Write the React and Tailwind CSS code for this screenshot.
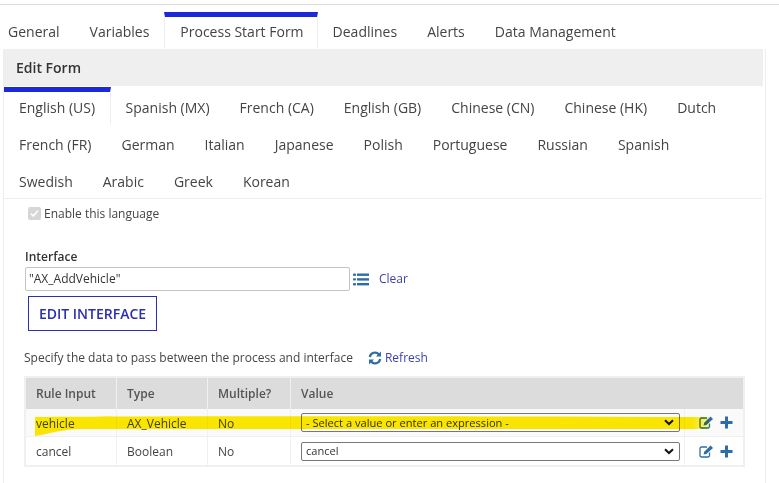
const mainTabs = ["General", "Variables", "Process Start Form", "Deadlines", "Alerts", "Data Management"];
const langs = ["English (US)", "Spanish (MX)", "French (CA)", "English (GB)", "Chinese (CN)", "Chinese (HK)", "Dutch", "French (FR)", "German", "Italian", "Japanese", "Polish", "Portuguese", "Russian", "Spanish", "Swedish", "Arabic", "Greek", "Korean"];
const rows = [
  { input: "vehicle", type: "AX_Vehicle", value: "- Select a value or enter an expression -" },
  { input: "cancel", type: "Boolean", value: "cancel" },
];

function ListIcon() {
  return (
    <svg width="16" height="13" viewBox="0 0 16 13" fill="#2d6da8">
      <rect x="0" y="0.5" width="3" height="2.4" rx="1" />
      <rect x="0" y="5.2" width="3" height="2.4" rx="1" />
      <rect x="0" y="10" width="3" height="2.4" rx="1" />
      <rect x="4" y="0.5" width="12" height="2.4" />
      <rect x="4" y="5.2" width="12" height="2.4" />
      <rect x="4" y="10" width="12" height="2.4" />
    </svg>
  );
}

function RefreshIcon() {
  return (
    <svg width="14" height="14" viewBox="0 0 14 14" fill="none" stroke="#2d6da8" strokeWidth="2.2">
      <path d="M1.8 6A5.3 5.3 0 0 1 11 3.4" />
      <path d="M12.2 8A5.3 5.3 0 0 1 3 10.6" />
      <path d="M13 0.6V5.6H8Z" fill="#2d6da8" stroke="none" />
      <path d="M1 13.4V8.4H6Z" fill="#2d6da8" stroke="none" />
    </svg>
  );
}

function EditIcon() {
  return (
    <svg width="15" height="13" viewBox="0 0 15 13" fill="none">
      <path d="M10.5 7.5V10.6A1.4 1.4 0 0 1 9.1 12H2.4A1.4 1.4 0 0 1 1 10.6V3.4A1.4 1.4 0 0 1 2.4 2H8" stroke="#2d6da8" strokeWidth="1.3" />
      <path d="M4.6 9.4L5.2 6.8L11.6 0.6L14 3L7.4 9Z" fill="#2d6da8" />
    </svg>
  );
}

function PlusIcon() {
  return (
    <svg width="13" height="13" viewBox="0 0 13 13" fill="#2d6da8">
      <path d="M5 0.5H8V5H12.5V8H8V12.5H5V8H0.5V5H5Z" />
    </svg>
  );
}

function Chevron() {
  return (
    <svg width="10" height="7" viewBox="0 0 10 7" fill="none" stroke="#111" strokeWidth="2">
      <path d="M1 1.2L5 5L9 1.2" />
    </svg>
  );
}

function Cell({ className = "", children }) {
  return <div className={`flex items-center pl-[10px] border-r border-[#f0f0f0] ${className}`}>{children}</div>;
}

export default function App() {
  return (
    <div className="w-[779px] h-[483px] overflow-hidden bg-white text-[#444] text-[14px] font-['Open_Sans',sans-serif]">
      <div className="h-[5px] border-b border-[#dcdcdc]" />
      <div className="flex h-[43px] pt-[7px]">
        {mainTabs.map((t, i) => (
          <div
            key={t}
            className={
              i === 2
                ? "flex items-center h-[36px] pb-[3px] pl-[15px] pr-[13px] border-t-[5px] border-[#1c28dc] border-x border-x-[#eeeeee] text-[#444]"
                : `flex items-center h-[36px] pt-[5px] pb-[3px] ${i === 0 ? "pl-[8px] pr-[15px]" : "px-[15px]"}`
            }
          >
            {t}
          </div>
        ))}
      </div>
      <div className="relative ml-[3px] w-[763px] h-[435px] border-l border-r border-[#ededed]">
        <div className="flex items-center h-[37px] w-[759px] pl-[12px] mt-[1px] mb-[1px] bg-[#efefef] font-semibold text-[#333]">Edit Form</div>
        <div className="flex flex-wrap w-[758px] h-[112px] border-b border-[#ededed]">
          {langs.map((l, i) => (
            <div
              key={l}
              className={
                i === 0
                  ? "flex items-center h-[37px] pl-[15px] pr-[14.5px] border-t-[5px] border-[#1c28dc] border-r border-r-[#ededed] pb-[1px]"
                  : "flex items-center h-[37px] px-[15px] pt-[4px]"
              }
            >
              {l}
            </div>
          ))}
        </div>
        <div className="flex items-center gap-[3px] mt-[6px] ml-[24px] text-[12px] leading-[17px]">
          <span className="flex items-center justify-center w-[13px] h-[13px] rounded-[2px] bg-[#d6d6d6]">
            <svg width="9" height="9" viewBox="0 0 9 9" fill="none" stroke="#ffffff" strokeWidth="1.6">
              <path d="M1 4.6L3.4 7L8 1.6" />
            </svg>
          </span>
          Enable this language
        </div>
        <div className="mt-[26px] ml-[21px] text-[12px] leading-[17px] font-semibold text-[#333]">Interface</div>
        <div className="flex items-center mt-[2px] ml-[21px]">
          <div className="flex items-center w-[325px] h-[24px] px-[3px] border border-[#c4c4c4] rounded-[2px] text-[12px] text-[#333]">"AX_AddVehicle"</div>
          <span className="ml-[3px] flex"><ListIcon /></span>
          <span className="ml-[10px] text-[12px] text-[#3a3fb5]">Clear</span>
        </div>
        <div className="flex items-center justify-center mt-[5px] ml-[24px] w-[129px] h-[35px] border border-[#2a2fae] text-[#2a2fae] text-[14px] font-semibold">EDIT INTERFACE</div>
        <div className="flex items-center mt-[18px] ml-[20px] text-[12px] leading-[17px]">
          <span>Specify the data to pass between the process and interface</span>
          <span className="ml-[15px] flex"><RefreshIcon /></span>
          <span className="ml-[3px] text-[#3a3fb5]">Refresh</span>
        </div>
        <div className="relative mt-[10px] ml-[20px] w-[721px] border-2 border-[#f0f0f0] text-[12px]">
          <div className="flex h-[31px] bg-[#dcdcdc] font-semibold text-[#555]">
            <Cell className="w-[91px]">Rule Input</Cell>
            <Cell className="w-[91px]">Type</Cell>
            <Cell className="w-[83px]">Multiple?</Cell>
            <div className="flex items-center pl-[10px]">Value</div>
          </div>
          {rows.map((r, i) => (
            <div key={r.input} className={`flex h-[28px] ${i === 0 ? "bg-[#fafafa] border-b border-[#f0f0f0]" : "bg-white"}`}>
              <Cell className="w-[91px] pt-[2px]">{r.input}</Cell>
              <Cell className="w-[91px] pt-[2px]">{r.type}</Cell>
              <Cell className="w-[83px] pt-[2px]">No</Cell>
              <Cell className="w-[394px]">
                <div className="flex items-center justify-between w-[379px] h-[19px] pl-[4px] pr-[5px] border border-[#777] rounded-[2px] text-[11.1px] text-[#333]">
                  <span className="pt-[1px]">{r.value}</span>
                  <Chevron />
                </div>
              </Cell>
              <div className="flex items-center gap-[6px] pl-[14px]">
                <EditIcon />
                <PlusIcon />
              </div>
            </div>
          ))}
          <svg className="absolute left-[7px] top-[37px] pointer-events-none mix-blend-multiply" width="680" height="24" viewBox="0 0 680 24">
            <defs>
              <linearGradient id="hl" x1="0" x2="1" y1="0" y2="0">
                <stop offset="0" stopColor="#ffea00" />
                <stop offset="0.975" stopColor="#ffea00" />
                <stop offset="1" stopColor="#ffea00" stopOpacity="0.4" />
              </linearGradient>
            </defs>
            <path d="M2 2C120 1 400 1 676 2L676 14C400 14 120 14 45 14C25 15 15 19 2 21Z" fill="url(#hl)" />
          </svg>
        </div>
      </div>
    </div>
  );
}
